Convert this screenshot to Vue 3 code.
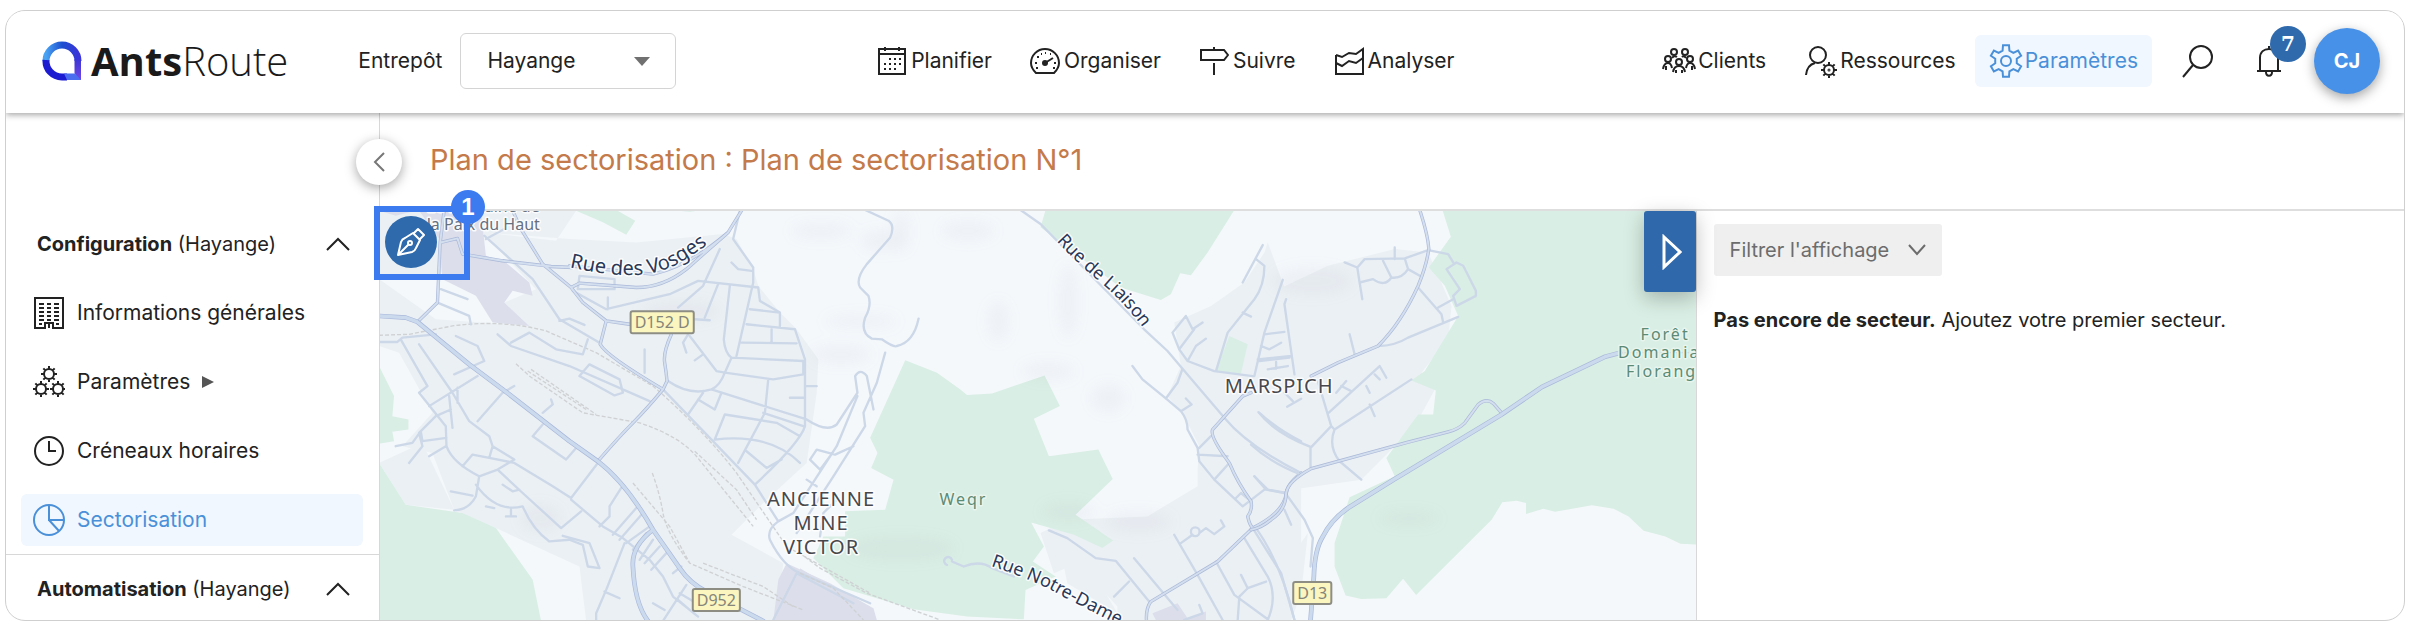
<template>
  <div class="page">
    <div class="frame">
      <header class="topbar">
        <div class="topbar-left">
          <a href="#" class="brand" aria-label="AntsRoute">
            <svg class="brand-mark" viewBox="0 0 40 40" aria-hidden="true">
              <defs>
                <linearGradient id="markTop" x1="0" y1="0" x2="1" y2="0">
                  <stop offset="0" stop-color="#4aa3f2" />
                  <stop offset="0.5" stop-color="#1c4fd0" />
                  <stop offset="1" stop-color="#3a35d8" />
                </linearGradient>
                <linearGradient id="markSide" x1="0" y1="0" x2="0" y2="1">
                  <stop offset="0" stop-color="#3b35d6" />
                  <stop offset="1" stop-color="#7048e6" />
                </linearGradient>
              </defs>
              <path d="M4 20A16 16 0 0 1 36 20" stroke="url(#markTop)" />
              <path d="M4 19A16 16 0 0 0 20 36H25" stroke="#1d1bd2" />
              <path d="M32.500 18H39V39H36L32.500 32Z" fill="url(#markSide)" stroke="none" />
              <path d="M22 32.500H33L39 39H25Z" fill="#4a6df0" stroke="none" />
            </svg>
            <span class="brand-name"><b>Ants</b>Route</span>
          </a>
          <div class="depot">
            <label for="depot">Entrepôt</label>
            <span class="select-wrap">
              <select id="depot" v-model="depot">
                <option>Hayange</option>
              </select>
              <svg class="select-arrow" viewBox="0 0 16 9" aria-hidden="true"><path d="M0 0H16L8 9Z" /></svg>
            </span>
          </div>
        </div>

        <nav class="nav is-main" aria-label="Navigation principale">
          <a v-for="item in mainNav" :key="item.label" href="#" class="nav-item">
            <svg class="icon" viewBox="0 0 30 30" aria-hidden="true">
              <path v-for="d in item.paths" :key="d" :d="d" />
              <path v-if="item.solid" class="solid" :d="item.solid" />
            </svg>
            <span>{{ item.label }}</span>
          </a>
        </nav>

        <div class="nav">
          <a
            v-for="item in sideNav"
            :key="item.label"
            href="#"
            class="nav-item is-tight"
            :class="{ 'is-active': item.active }"
          >
            <svg class="icon is-large" viewBox="0 0 34 34" aria-hidden="true">
              <path v-for="d in item.paths" :key="d" :d="d" />
            </svg>
            <span>{{ item.label }}</span>
          </a>
          <button type="button" class="icon-button" aria-label="Rechercher">
            <svg class="icon is-large" viewBox="0 0 34 34" aria-hidden="true">
              <circle cx="21" cy="13" r="11" />
              <path d="M13 21L3 33" />
            </svg>
          </button>
          <button type="button" class="icon-button bell" aria-label="Notifications">
            <svg class="icon is-large" viewBox="0 0 34 34" aria-hidden="true">
              <path d="M5 27H29M8 27V14C8 8 12 5 17 5S26 8 26 14V27M17 2V5M14 28C14 33 20 33 20 28" />
            </svg>
            <span class="bell-count">7</span>
          </button>
          <button type="button" class="avatar">CJ</button>
        </div>
      </header>

      <div class="body">
        <aside class="sidebar">
          <button type="button" class="section-head" aria-expanded="true">
            <span><b>Configuration</b> (Hayange)</span>
            <svg class="chevron" viewBox="0 0 24 14" aria-hidden="true"><path d="M1 13L12 2L23 13" /></svg>
          </button>
          <a
            v-for="item in configItems"
            :key="item.label"
            href="#"
            class="side-item"
            :class="{ 'is-active': item.active }"
          >
            <svg class="icon is-medium" viewBox="0 0 32 32" aria-hidden="true">
              <path v-for="d in item.paths" :key="d" :d="d" />
            </svg>
            <span>{{ item.label }}</span>
            <svg v-if="item.more" class="more" viewBox="0 0 12 12" aria-hidden="true"><path d="M0 0L12 6L0 12Z" /></svg>
          </a>
          <div class="section">
            <button type="button" class="section-head" aria-expanded="true">
              <span><b>Automatisation</b> (Hayange)</span>
              <svg class="chevron" viewBox="0 0 24 14" aria-hidden="true"><path d="M1 13L12 2L23 13" /></svg>
            </button>
          </div>
        </aside>

        <main class="content">
          <button type="button" class="collapse" aria-label="Réduire le menu">
            <svg viewBox="0 0 12 20" aria-hidden="true"><path d="M11 1L2 10L11 19" /></svg>
          </button>
          <div class="title-bar">
            <h1>Plan de sectorisation : Plan de sectorisation N°1</h1>
          </div>

          <div class="split">
            <section class="map-pane" aria-label="Carte">
              <svg class="map" viewBox="0 0 1316 408" preserveAspectRatio="xMinYMin slice">
                <!-- tiles are drawn at 3x -->
                <g transform="scale(0.3333)">
                  <g v-for="tile in tiles" :key="tile.name" :transform="tile.offset">
                    <path v-for="d in tile.urban" :key="d" class="urban" :d="d" />
                    <path v-for="d in tile.green" :key="d" class="green" :d="d" />
                    <path v-for="d in tile.industry" :key="d" class="industry" :d="d" />
                  </g>
                  <g class="relief">
                    <ellipse v-for="(r, i) in relief" :key="i" :cx="r[0]" :cy="r[1]" :rx="r[2]" :ry="r[3]" />
                  </g>
                  <g v-for="tile in tiles" :key="tile.name" :transform="tile.offset">
                    <path class="rail" :d="tile.rail" />
                    <path class="street" :d="tile.street" />
                    <path class="road-case" :d="tile.road" />
                    <path class="road" :d="tile.road" />
                    <path class="main-case" :d="tile.main" />
                    <path class="main-road" :d="tile.main" />
                  </g>
                </g>
                <defs>
                  <path id="vosges" d="M189 56C235 66 270 69 300 51Q322 38 350 16" />
                  <path id="liaison" d="M675 30Q695 52 722 74Q748 96 780 142" />
                  <path id="notre" d="M609 354Q655 369 680 384Q715 402 790 440" />
                </defs>
                <text class="label street-label is-wide"><textPath href="#vosges">Rue des Vosges</textPath></text>
                <text class="label street-label"><textPath href="#liaison">Rue de Liaison</textPath></text>
                <text class="label street-label"><textPath href="#notre">Rue Notre-Dame</textPath></text>
                <text class="label place-label" x="103" y="1">Le Domaine de</text>
                <text class="label place-label" x="103" y="19">la Paix du Haut</text>
                <text class="label town-label" x="440" y="294">ANCIENNE</text>
                <text class="label town-label" x="440" y="318">MINE</text>
                <text class="label town-label" x="440" y="342">VICTOR</text>
                <text class="label town-label" x="897" y="182">MARSPICH</text>
                <text class="label wood-label" x="582" y="293">Weqr</text>
                <text class="label wood-label" x="1282" y="129">Forêt</text>
                <text class="label wood-label is-start" x="1235" y="147">Domania</text>
                <text class="label wood-label is-start" x="1243" y="166">Florang</text>
                <g v-for="s in shields" :key="s.name">
                  <rect class="shield" :x="s.x" :y="s.y" :width="s.w" height="22" rx="2" />
                  <text class="shield-text" :x="s.x + s.w / 2" :y="s.y + 17">{{ s.name }}</text>
                </g>
              </svg>

              <button type="button" class="draw-button" aria-label="Dessiner un secteur">
                <svg viewBox="0 0 30 30" aria-hidden="true">
                  <path d="M2 28L5 15Q6 12 9 11L17 6L24 13L20 21Q19 24 16 25ZM18 6L22 2L28 8L24 12M2 28L13 17" />
                  <circle cx="14" cy="16" r="2" />
                </svg>
              </button>
              <div class="marker"><span class="marker-count">1</span></div>
              <button type="button" class="panel-toggle" aria-label="Masquer le panneau">
                <svg viewBox="0 0 20 36" aria-hidden="true"><path d="M2 3L18 18L2 33Z" /></svg>
              </button>
            </section>

            <section class="panel">
              <button type="button" class="filter">
                Filtrer l'affichage
                <svg viewBox="0 0 18 12" aria-hidden="true"><path d="M1 1L9 10L17 1" /></svg>
              </button>
              <p><b>Pas encore de secteur.</b> Ajoutez votre premier secteur.</p>
            </section>
          </div>
        </main>
      </div>
    </div>
  </div>
</template>

<script setup>
import { ref } from 'vue'

const depot = ref('Hayange')

// circle as a path, so that icons are plain lists of paths
const ring = (cx, cy, r) => `M${cx - r} ${cy}a${r} ${r} 0 1 0 ${2 * r} 0a${r} ${r} 0 1 0 ${-2 * r} 0Z`

const gear = (cx, cy, inner, outer, teeth) => {
  const step = (Math.PI * 2) / teeth
  const points = []
  for (let i = 0; i < teeth; i++) {
    const a = i * step - Math.PI / 2
    for (const [offset, r] of [[-0.3, inner], [-0.18, outer], [0.18, outer], [0.3, inner]]) {
      const t = a + offset * step
      points.push(`${(cx + Math.cos(t) * r).toFixed(2)} ${(cy + Math.sin(t) * r).toFixed(2)}`)
    }
  }
  return `M${points.join('L')}Z`
}

// small gears read better as a ring with spokes
const cog = (cx, cy, inner, outer) => {
  let d = ring(cx, cy, inner)
  for (let i = 0; i < 8; i++) {
    const t = (i * Math.PI) / 4
    const x = Math.cos(t)
    const y = Math.sin(t)
    d += `M${(cx + x * inner).toFixed(2)} ${(cy + y * inner).toFixed(2)}L${(cx + x * outer).toFixed(2)} ${(cy + y * outer).toFixed(2)}`
  }
  return d
}

const mainNav = [
  {
    label: 'Planifier',
    paths: ['M2 3H28V28H2Z', 'M2 8H28', 'M8 1V5M22 1V5', 'M12 13h2M17 13h2M22 13h2M7 18h2M12 18h2M17 18h2M22 18h2M7 23h2M12 23h2M17 23h2'],
  },
  {
    label: 'Organiser',
    paths: ['M6 27H24C27 24 29 21 29 17A14 14 0 0 0 1 17C1 21 3 24 6 27Z', 'M15 17L23 12', 'M5 17h2M7 11h2M11 8h1M15 7h1M20 8h1M24 17h2M6 22h2M23 22h2'],
    solid: ring(15, 17, 3),
  },
  { label: 'Suivre', paths: ['M15 1V4M2 4H25L29 9L25 14H2ZM15 17V29'] },
  { label: 'Analyser', paths: ['M2 9V28H29V3L22 8L15 7L8 11L2 9', 'M2 17L8 20L15 15L22 17L29 12'] },
]

const sideNav = [
  {
    label: 'Clients',
    paths: [
      ring(12, 8, 3),
      ring(23, 8, 3),
      ring(6, 15, 3),
      ring(28, 15, 3),
      ring(17, 18, 3),
      'M1 25Q2 19 6 19Q9 19 10 24M4 26V22M24 24Q25 19 28 19Q32 19 33 25M30 26V22',
      'M11 28Q12 22 17 22Q22 22 23 28M14 29V26M20 29V26M10 14Q12 11 15 13M20 13Q22 11 24 14',
    ],
  },
  {
    label: 'Ressources',
    paths: [ring(14, 11, 8), 'M2 31Q3 21 11 19', cog(25, 26, 5, 8), ring(25, 26, 0.5)],
  },
  { label: 'Paramètres', active: true, paths: [gear(17, 17, 11, 16, 6), ring(17, 17, 5)] },
]

const configItems = [
  {
    label: 'Informations générales',
    paths: ['M2 1H30V31H20V26H12V31H2Z', 'M6 7h5M14 7h4M21 7h5M6 11h5M14 11h4M21 11h5M6 15h5M14 15h4M21 15h5M6 19h5M14 19h4M21 19h5M6 23h5M14 23h4M21 23h5M6 27h3M23 27h3M16 27V31'],
  },
  { label: 'Paramètres', more: true, paths: [cog(16, 8, 5, 8), cog(8, 23, 5, 8), cog(25, 23, 5, 8)] },
  { label: 'Créneaux horaires', paths: [ring(16, 16, 14), 'M16 6V16H23'] },
  { label: 'Sectorisation', active: true, paths: [ring(16, 16, 15), 'M16 1V16H31M16 16L26 27'] },
]

const shields = [
  { name: 'D152 D', x: 250, y: 100, w: 63 },
  { name: 'D952', x: 312, y: 377, w: 47 },
  { name: 'D13', x: 911, y: 370, w: 38 },
]

const relief = [
  [1320, 60, 90, 22], [1500, 90, 60, 30], [1560, 60, 24, 60], [1440, 330, 110, 18], [2060, 270, 26, 110],
  [1850, 330, 30, 60], [1760, 60, 80, 26], [2000, 480, 80, 24], [1560, 1010, 160, 34], [2060, 900, 80, 26],
  [2270, 930, 100, 30], [2180, 560, 50, 40], [2790, 210, 120, 40], [480, 920, 60, 40], [3080, 920, 90, 20],
  [1380, 430, 90, 26], [900, 300, 120, 30],
]

const tiles = [
  {
    name: 'west',
    offset: 'translate(-33 -96)',
    urban: [
      'M30 300L205 300L300 150L345 160L560 185L620 95H30ZM340 160L600 180L800 190L1060 165L1100 180L1150 270L1165 320L1230 400L1280 450L1345 540L1340 640L1310 850L1190 960L1085 1065L1240 1150L1220 1323H650L630 1160L380 1045L255 990L190 820L100 800L190 700L90 520L30 500V300L200 420L480 440L405 370L500 330Z',
      'M160 790L30 850L110 975L255 990Z',
      'M700 440L980 400L1150 320L1100 640L960 700Z',
    ],
    green: [
      'M30 560L75 650L70 710L118 720V750L70 757L75 785L30 792Z',
      'M30 850L110 975L280 1000L380 1045L490 1200L515 1323H30Z',
      'M615 93H740L797 125L770 167L700 130Z',
      'M900 93H1000L960 98Z',
    ],
    industry: [
      'M150 95H335L350 230L410 250L480 310L490 350L430 335L405 370L480 440L370 430L320 350L220 300L210 180Z',
      'M1250 1150L1380 1210L1500 1280V1323H1210L1225 1200Z',
      'M30 95H140L80 110Z',
    ],
    rail:
      'M30 468L120 465L250 440Q400 420 530 455L680 520L850 620Q1000 750 1100 880L1250 1100L1500 1240' +
      'M440 553L480 590L640 700L810 730Q930 770 980 830L1150 1040M790 910L900 1040L960 1150L1120 1220L1300 1290' +
      'M848 880Q870 940 880 1000T960 1150M475 575L650 690M485 570L680 705M975 815L1100 930L1160 1020M1000 1150L1180 1220L1270 1280',
    street:
      'M30 488H85L100 475L200 465M95 480L175 620L150 640L230 740L232 800Q250 850 330 890L385 870L435 840L370 800L360 770L300 725L250 640L150 495' +
      'M260 470L325 500L345 545L255 585M180 680L325 590M120 850L160 800L150 760L200 710L245 690M80 800L130 790L155 755L160 785L232 775M180 830L230 800' +
      'M325 725L400 640L435 620M265 625V670M240 650L250 745M330 890L320 950Q300 990 255 992M245 935L310 948' +
      'M280 860L310 825L360 835L435 850L550 920L605 955L685 850M360 835L370 800M385 870L460 940L575 1045L635 995' +
      'M320 915Q380 1000 460 980Q490 1050 540 1085L600 1080L640 1095L655 1160L690 1165L660 1090L580 1068M400 915L430 935L450 930' +
      'M350 980L375 985M425 990V1010M410 1010H440M605 960L700 1040L760 1075L840 1140L880 1190L910 1250L985 1310' +
      'M490 770L590 840L620 805M490 770L520 735M520 700L550 675L545 660M690 1040L720 1010V980L755 925M730 1065L800 985' +
      'M750 1080L820 1000M770 1090L840 1040M765 1090L710 1230L680 1300V1323M705 1235L750 1255M790 1110L830 1060M810 1140L850 1080' +
      'M825 1150L870 1100M845 1170L890 1120M910 1180L935 1160M850 1270L885 1290M880 1323L950 1215M925 1260L960 1290M930 1240L980 1270' +
      'M385 465L425 500L600 560L840 665M425 490L480 460L560 510L640 525L655 480M630 590L660 555L750 600L760 640L735 648L630 590' +
      'M345 170L490 300L570 420L690 490M570 425L600 418L645 437M350 180L405 150M215 330L295 360M205 370L300 410L305 435' +
      'M610 335L710 390L900 345L985 305L1165 325L1170 365L1230 400V440M925 385L1000 320L1050 210M715 390V355' +
      'M630 290L735 300V330H625ZM825 510V580M1110 95L1090 180L1150 265V310L1100 530M1085 250L1105 270L1145 275' +
      'M1080 320L1062 480Q1065 520 1085 535L1300 545V585L1210 600L1065 580M1045 315L1005 415M975 420L1020 423M1140 390L1230 400' +
      'M1130 435L1275 450L1305 540V740M1115 490L1280 492M1205 450V490M960 470L1040 575L1065 580L1085 535M1065 580Q1050 620 1025 630Q960 650 895 605' +
      'M955 465L940 490L950 520M975 543L1000 525M1025 630L1310 720Q1370 760 1400 735L1462 640L1455 590Q1470 565 1490 590L1510 690' +
      'M1195 600L1185 700L1105 850M955 705L1000 640M985 660L1035 690L1055 640M1180 700L1300 740M1035 780L1065 705L1220 730L1290 770' +
      'M1035 780Q1200 760 1290 850M1130 815L1190 865L1235 840M1305 740Q1290 790 1155 915M1305 620H1340M1260 655H1305' +
      'M880 630L1155 915L1225 1025L1270 1000L1400 800L1462 650M1225 1025Q1190 1050 1200 1080Q1240 1160 1290 1180L1500 1270' +
      'M1545 520L1520 610L1480 700L1485 740L1390 890L1280 1060M1320 840L1340 810L1395 825L1450 800M1320 840L1350 870L1380 830M1310 900L1340 920M1400 960L1360 1000L1350 1070' +
      'M1210 1320L1280 1180L1450 1270',
    road:
      'M145 428L205 370L213 190L225 95M215 190L265 178L280 225L400 245L545 262L610 265M430 95L455 150L520 255L605 325L640 370L710 425L780 435' +
      'M605 325L630 312L800 325Q880 325 950 270L1075 160L1115 95M1075 160Q960 260 850 285L600 260M710 425L692 495Q710 530 880 630' +
      'M905 465Q880 520 885 550T892 605L880 630Q830 690 790 730T685 845',
    main: 'M30 410L110 415L145 428L300 555L420 645L600 785L685 845Q770 910 850 1050L930 1165Q960 1210 1010 1235L1180 1323M850 1050Q785 1100 790 1160Q795 1270 835 1323',
  },
  {
    name: 'centre',
    offset: 'translate(1257 -36)',
    urban: [
      'M1190 810V860L1040 950L800 960L720 1000L760 1120L830 1090L950 1220V1260H1460L1500 1050V400L1400 130L1390 160L1330 250L1230 320L1120 370L1140 500L1100 590L1150 650L1195 740Z',
      'M1500 240L1400 285L1370 400L1500 420Z',
      'M790 1100L830 1088L880 1120L950 1240L800 1150Z',
    ],
    green: [
      'M735 33H1300L1220 160L1170 228L1138 222L1110 285L1080 302L960 265L720 85Z',
      'M315 483L410 520L480 570L500 587L575 582L732 528L778 620L700 658L745 770L893 750L936 838L825 945L937 1022L905 1045L820 1005L692 968L730 1040L697 1085L765 1130L675 1170L670 1258L500 1250L340 1228L130 1165L40 1075L70 1010H135V935L255 930L280 840L213 805L232 760L210 715Z',
      'M1285 410L1340 435L1320 522L1245 515Z',
    ],
    industry: ['M1055 1240L1130 1210L1160 1255L1215 1235V1260H1065Z', 'M0 1105L90 1160L220 1225L230 1260H0Z'],
    rail: 'M0 1060L60 1105L200 1180L420 1260M0 1120L100 1165L190 1260',
    street:
      'M195 33L265 65Q285 80 270 115L200 195Q165 240 180 265L205 290Q215 320 195 355Q180 400 215 418L245 420Q280 445 290 440Q340 430 355 358' +
      'M660 33L720 75L1030 390L1100 455L1145 508L1270 655Q1340 740 1500 820M1115 400L1155 350L1175 390L1205 370M1115 400L1135 450L1160 485L1240 515L1355 530' +
      'M1135 450L1180 390M1160 485L1185 440L1215 418M1145 508L1130 550L1095 597M995 500L1025 540L1095 597L1140 635Q1160 660 1160 690L1190 745L1195 785L1240 840L1325 920L1390 870' +
      'M1140 635L1172 615L1155 597M1195 745L1230 710M1190 765L1280 770M1240 840L1285 790M1385 138L1325 250M1365 180L1390 200Q1390 260 1360 300L1280 400L1245 515' +
      'M1325 340L1350 352M1445 242L1390 400L1360 530M1390 405L1450 398M1380 440L1405 450L1440 430M1375 485L1465 475M1400 510L1460 500M1425 488V508' +
      'M1305 895L1320 880L1350 905M1360 830L1400 870L1455 880M1450 930L1470 975M745 992L800 1015L885 1075L945 1083L1045 1205M1000 1075L1130 1230M1120 1005L1190 1125L1265 1260' +
      'M1140 1030L1175 1005M1195 1000L1215 985L1240 1003L1270 980L1260 962M1170 996A12 12 0 1 0 1196 996A12 12 0 1 0 1170 996M1355 985L1440 1120L1480 1260' +
      'M1330 1015L1400 1130Q1430 1190 1400 1260M1245 1085L1300 1185L1400 1258M1320 1125L1340 1165L1395 1145M1340 1165L1315 1190L1310 1260M985 1145L940 1190M1150 1260L1205 1240L1195 1215' +
      'M455 1080A12 12 0 1 0 440 1095M455 1085L490 1100Q540 1080 575 1105L640 1130M1375 640Q1430 690 1500 725',
    road: 'M1350 580L1325 590L1235 690Q1225 710 1285 790Q1310 850 1350 905Q1355 930 1340 950Q1345 975 1355 985M1500 820Q1455 855 1455 885Q1445 940 1355 985L1250 1085L1050 1205Q1035 1225 1037 1262',
    main: '',
  },
  {
    name: 'east',
    offset: 'translate(2607 -36)',
    urban: ['M50 285L230 200L430 150L530 160L600 320L590 420L510 520L550 570L490 680L330 840L120 870L100 1100L170 1000L150 1180L120 1260H0V400Z'],
    green: [
      'M573 33H1345V1035L1285 1032L1240 1010L1175 993L1130 950L1085 927L1020 917L910 936L875 927L823 943V910L795 903L752 908L720 960L494 1185L455 1137L405 1195L330 1197L283 1187L250 1100V1030L295 893L430 830L405 775L500 645H545L553 573L480 543L520 515L620 350L580 260L532 205L598 113Z',
    ],
    industry: [],
    rail: 'M1100 460H1345',
    street:
      'M280 190L318 205L340 180L460 178L530 153M430 145V180M318 205L325 250L333 300M325 250L365 240Q400 265 420 235L395 185M420 235Q450 240 470 210L460 178M470 210L505 230' +
      'M530 153L590 165L605 190M585 210L615 190L635 200L673 275V290L615 320L605 290L625 270ZM500 265L570 345L575 370M560 325L605 300M380 440Q430 440 470 415L620 353' +
      'M295 405L310 465M120 470L20 480M105 300L100 315L130 525M200 545L240 680L250 690L480 540M232 640L385 500L405 535M345 560L355 580M355 615L370 650' +
      'M270 560L300 575M285 545L255 580M370 525L385 540M240 680L178 745V805M250 690Q230 740 265 785L330 840M22 638Q70 700 178 742M0 735Q60 790 150 825' +
      'M110 890L160 960L185 1015L178 1100M100 580L125 605M108 622L150 598M10 830L45 870L100 880M15 985Q90 1090 130 1260',
    road:
      'M505 33Q530 110 532 150Q525 200 500 260Q450 370 380 440L260 490L180 530M750 640L725 612Q705 595 680 615L640 670Q620 690 590 697L470 728L180 807Q110 845 105 880Q105 930 60 960Q30 985 0 990',
    main: 'M178 1262L188 1130Q190 1050 215 1010Q240 960 290 925L430 838L750 645L870 563L1060 472L1105 460',
  },
]
</script>

<style>
body {
  margin: 0;
  background: #fff;
}
</style>

<style scoped>
.page {
  box-sizing: border-box;
  min-height: 100vh;
  display: flex;
  padding: 10px 5px 4px;
  font-family: Inter, "Open Sans", sans-serif;
  font-size: 20px;
  line-height: 28px;
  color: #222;
}

.page * {
  box-sizing: border-box;
}

.frame {
  flex: 1;
  min-width: 0;
  display: flex;
  flex-direction: column;
  border: 1px solid #cfcfcf;
  border-radius: 20px;
  overflow: hidden;
}

button,
select {
  font: inherit;
  color: inherit;
  cursor: pointer;
}

button {
  padding: 0;
  border: 0;
  background: none;
}

a {
  color: inherit;
  text-decoration: none;
}

b {
  font-weight: 700;
}

svg {
  flex: none;
  fill: none;
  stroke: currentColor;
}

.icon {
  width: 30px;
  height: 30px;
  stroke-width: 2;
}

.icon.is-large {
  width: 34px;
  height: 34px;
}

.icon.is-medium {
  width: 32px;
  height: 32px;
}

.icon .solid {
  fill: currentColor;
  stroke: none;
}

/* top bar */
.topbar {
  position: relative;
  z-index: 3;
  display: flex;
  align-items: center;
  justify-content: space-between;
  height: 102px;
  padding: 0 24px 2px 36px;
  background: #fff;
  box-shadow: 0 2px 6px rgba(0, 0, 0, 0.35);
  font-size: 21px;
}

.topbar-left {
  display: flex;
  align-items: center;
  gap: 70px;
}

.brand {
  display: flex;
  align-items: center;
  gap: 9px;
}

.brand-mark {
  width: 40px;
  height: 40px;
  stroke-width: 7;
}

.brand-name {
  font-family: "Open Sans", sans-serif;
  font-size: 40px;
  font-weight: 300;
  line-height: 48px;
  color: #1a1a1a;
}

.depot {
  display: flex;
  align-items: center;
  gap: 18px;
}

.select-wrap {
  position: relative;
  display: flex;
  align-items: center;
}

.select-wrap select {
  width: 216px;
  height: 56px;
  padding: 0 48px 0 26px;
  appearance: none;
  border: 1px solid #d4d4d4;
  border-radius: 6px;
  background: #fff;
}

.select-arrow {
  position: absolute;
  right: 26px;
  width: 16px;
  height: 9px;
  fill: #707070;
  stroke: none;
  pointer-events: none;
}

.nav {
  display: flex;
  align-items: center;
}

.nav.is-main {
  padding-left: 12px;
}

.nav-item {
  display: flex;
  align-items: center;
  gap: 4px;
  height: 52px;
  padding: 0 19px;
  border-radius: 6px;
}

.nav-item.is-tight {
  gap: 2px;
}

.nav-item.is-active,
.side-item.is-active {
  color: #4a90d9;
  background: #f1f7fe;
}

.nav-item.is-active {
  padding: 0 14px;
}

.icon-button {
  position: relative;
  display: flex;
  margin-left: 28px;
}

.bell {
  margin-left: 38px;
}

.bell-count {
  position: absolute;
  top: -18px;
  right: -20px;
  width: 36px;
  height: 36px;
  border-radius: 50%;
  background: #2f6aad;
  color: #fff;
  font-family: "DejaVu Serif", serif;
  font-size: 20px;
  font-weight: 700;
  line-height: 36px;
}

.avatar {
  width: 66px;
  height: 66px;
  margin-left: 28px;
  border-radius: 50%;
  background: #4791e8;
  box-shadow: 0 4px 12px rgba(0, 0, 0, 0.35);
  color: #fff;
  font-size: 20px;
  font-weight: 700;
}

/* sidebar */
.body {
  flex: 1;
  display: flex;
}

.sidebar {
  flex: none;
  width: 374px;
  display: flex;
  flex-direction: column;
  gap: 17px;
  padding-top: 105px;
  border-right: 1px solid #d8d8d8;
}

.section-head {
  width: 100%;
  height: 52px;
  display: flex;
  align-items: center;
  justify-content: space-between;
  padding: 0 29px 0 31px;
}

.section {
  margin-top: -9px;
  padding-top: 8px;
  border-top: 1px solid #d8d8d8;
}

.chevron {
  width: 24px;
  height: 14px;
  stroke-width: 2;
}

.side-item {
  display: flex;
  align-items: center;
  gap: 12px;
  height: 52px;
  margin: 0 16px 0 15px;
  padding: 0 12px;
  border-radius: 6px;
  font-size: 21px;
}

.more {
  width: 12px;
  height: 12px;
  fill: #555;
  stroke: none;
}

/* content */
.content {
  position: relative;
  flex: 1;
  min-width: 0;
  display: flex;
  flex-direction: column;
}

.collapse {
  position: absolute;
  z-index: 2;
  top: 26px;
  left: -24px;
  width: 46px;
  height: 46px;
  display: flex;
  align-items: center;
  justify-content: center;
  border-radius: 50%;
  background: #fff;
  box-shadow: 0 3px 12px rgba(0, 0, 0, 0.35);
  color: #777;
}

.collapse svg {
  width: 12px;
  height: 20px;
  stroke-width: 2;
}

.title-bar {
  height: 98px;
  display: flex;
  align-items: center;
  padding: 0 50px 2px;
  border-bottom: 2px solid #dedede;
}

h1 {
  margin: 0;
  font-size: 29px;
  font-weight: 400;
  line-height: 36px;
  color: #c47a4a;
}

.split {
  flex: 1;
  display: grid;
  grid-template-columns: 65fr 35fr;
}

.map-pane {
  position: relative;
  min-width: 0;
  background: #f4f8fb;
}

.map {
  position: absolute;
  inset: 0;
  width: 100%;
  height: 100%;
  stroke-linecap: round;
  stroke-linejoin: round;
}

.urban {
  fill: #ebf0f4;
  stroke: none;
}

.green {
  fill: #d9eee4;
  stroke: none;
}

.industry {
  fill: #dcdfeb;
  stroke: none;
}

.relief {
  fill: rgba(150, 160, 180, 0.07);
  stroke: none;
  filter: blur(20px);
}

.rail {
  stroke: #cfd1d3;
  stroke-width: 4;
  stroke-dasharray: 12 6;
  stroke-linecap: butt;
}

.street {
  stroke: #ccd7e8;
  stroke-width: 7;
}

.road-case {
  stroke: #aab8d8;
  stroke-width: 10;
}

.road {
  stroke: #d3deee;
  stroke-width: 6;
}

.main-case {
  stroke: #a9b8da;
  stroke-width: 14;
}

.main-road {
  stroke: #ccdaee;
  stroke-width: 10;
}

.label {
  font-family: "Noto Sans", "Open Sans", sans-serif;
  stroke: rgba(255, 255, 255, 0.85);
  stroke-width: 3;
  paint-order: stroke;
}

.street-label {
  font-size: 18px;
  fill: #2a3858;
}

.street-label.is-wide {
  font-size: 20px;
}

.place-label {
  font-size: 16px;
  fill: #66707f;
  text-anchor: middle;
}

.town-label {
  font-size: 20px;
  letter-spacing: 1px;
  fill: #48484c;
  text-anchor: middle;
}

.wood-label {
  font-size: 16px;
  letter-spacing: 2px;
  fill: #5c8a74;
  stroke: rgba(235, 247, 241, 0.85);
  text-anchor: middle;
}

.wood-label.is-start {
  text-anchor: start;
}

.shield {
  fill: #fbf5c0;
  stroke: #8d8d84;
  stroke-width: 2;
}

.shield-text {
  font-family: "Noto Sans", sans-serif;
  font-size: 16px;
  fill: #85857a;
  stroke: none;
  text-anchor: middle;
}

.draw-button {
  position: absolute;
  top: 5px;
  left: 5px;
  width: 52px;
  height: 52px;
  display: flex;
  align-items: center;
  justify-content: center;
  border-radius: 50%;
  background: #2f6aad;
  color: #fff;
}

.draw-button svg {
  width: 30px;
  height: 30px;
  stroke-width: 2;
  stroke-linejoin: round;
}

.marker {
  position: absolute;
  z-index: 2;
  top: -5px;
  left: -6px;
  width: 96px;
  height: 74px;
  border: 6px solid #3c7af0;
  pointer-events: none;
}

.marker-count {
  position: absolute;
  top: -22px;
  right: -21px;
  width: 34px;
  height: 34px;
  border-radius: 50%;
  background: #3c7af0;
  color: #fff;
  font-family: "Liberation Sans", sans-serif;
  font-size: 24px;
  font-weight: 700;
  line-height: 34px;
  text-align: center;
}

.panel-toggle {
  position: absolute;
  top: 0;
  right: 0;
  width: 52px;
  height: 81px;
  display: flex;
  align-items: center;
  justify-content: center;
  padding-left: 4px;
  border-radius: 3px;
  background: #2f69ab;
  box-shadow: 0 6px 20px rgba(0, 0, 0, 0.25);
  color: #fff;
}

.panel-toggle svg {
  width: 20px;
  height: 36px;
  stroke-width: 3;
}

.panel {
  min-width: 0;
  padding: 13px 17px;
  border-left: 1px solid #d8d8d8;
}

.filter {
  display: flex;
  align-items: center;
  gap: 19px;
  height: 52px;
  padding: 0 16px;
  border-radius: 3px;
  background: #efefef;
  color: #6c6c6c;
}

.filter svg {
  width: 18px;
  height: 12px;
  stroke-width: 2;
}

.panel p {
  margin: 30px 0 0;
}
</style>
